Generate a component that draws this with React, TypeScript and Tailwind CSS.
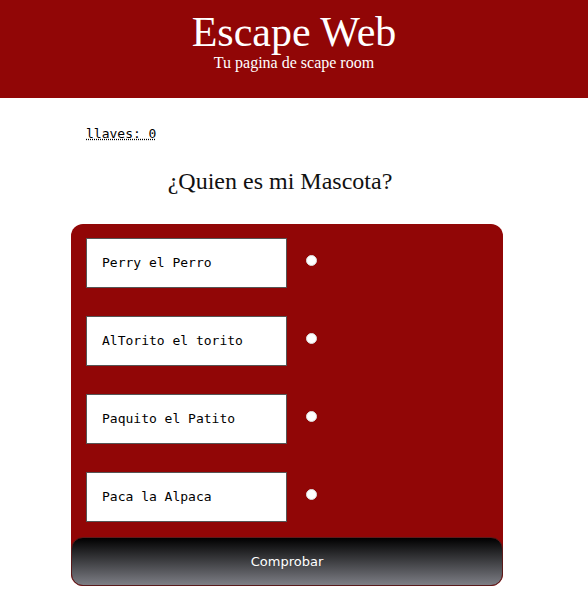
const OPTIONS = ["Perry el Perro", "AlTorito el torito", "Paquito el Patito", "Paca la Alpaca"];

export default function App() {
  return (
    <div className="min-h-[602px] bg-white">
      <header className="flex h-[98px] flex-col items-center bg-[#910606] pt-[9px] text-white [font-family:'Liberation_Serif',serif]">
        <h1 className="text-[42px] leading-[46px]">Escape Web</h1>
        <p className="text-[16px] leading-[16px]">Tu pagina de scape room</p>
      </header>

      <main className="ml-[71px] w-[432px] pt-[28px]">
        <p className="pl-[15px] text-[13px] leading-[16px] [font-family:'DejaVu_Sans_Mono',monospace]">
          <abbr title="llaves" className="underline decoration-dotted">
            llaves: 0
          </abbr>
        </p>

        <h2 className="mt-[25px] pr-[14px] text-center text-[24px] leading-[28px] text-[#111] [font-family:'Liberation_Serif',serif]">
          ¿Quien es mi Mascota?
        </h2>

        <form className="mt-[29px] rounded-[12px] bg-[#910606] pt-[14px]">
          <div className="flex flex-col gap-[28px] px-[15px]">
            {OPTIONS.map((o) => (
              <label key={o} className="flex items-center">
                <div className="flex h-[50px] w-[201px] items-center border border-[#555] bg-white pl-[15px] text-[13px] text-black [font-family:'DejaVu_Sans_Mono',monospace]">
                  {o}
                </div>
                <span className="mb-[5px] ml-[19px] block h-[11px] w-[11px] rounded-full border border-[#ddd] bg-white" />
              </label>
            ))}
          </div>
          <button
            type="button"
            className="mt-[15px] flex h-[49px] w-full items-center justify-center rounded-[12px] border border-[#5a1a1a] bg-[linear-gradient(to_bottom,#000,#7d7e85)] text-[13px] text-white [font-family:'DejaVu_Sans',sans-serif]"
          >
            Comprobar
          </button>
        </form>
      </main>
    </div>
  );
}
